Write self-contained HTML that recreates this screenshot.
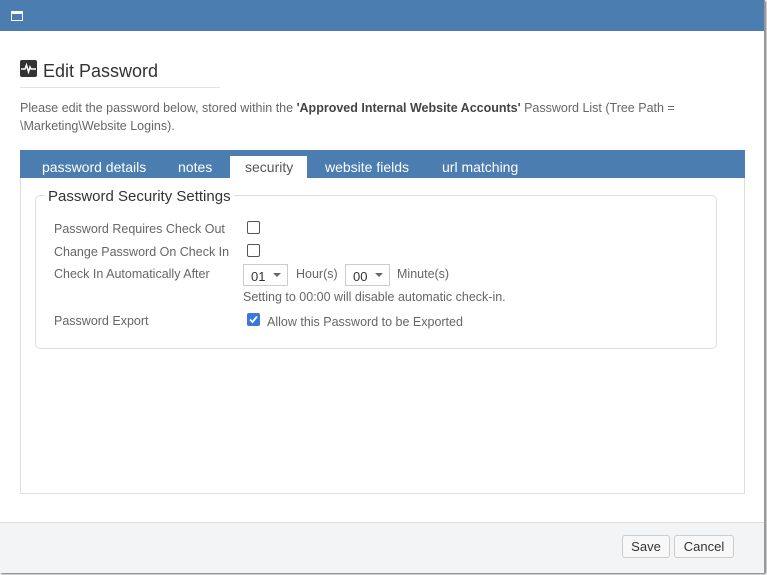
<!DOCTYPE html>
<html><head><style>
*{box-sizing:border-box;margin:0;padding:0}
body{width:767px;height:575px;background:#fff;font-family:"Liberation Sans",sans-serif;position:relative;overflow:hidden;color:#555}
.win{position:absolute;left:0;top:0;width:765px;height:573px;background:#fff;border-right:1px solid #999;border-bottom:1px solid #999;box-shadow:1px 1px 2px #666}
.hdr{position:absolute;left:0;top:0;width:764px;height:31px;background:#4c7db0}
.t{position:absolute;white-space:nowrap}
.panel{position:absolute;left:20px;top:150px;width:725px;height:344px;border:1px solid #ddd}
.tabs{position:absolute;left:20px;top:150px;width:725px;height:28px;background:#4c7db0}
.tab{position:absolute;top:9px;color:#fff;font-size:14px}
.fs{position:absolute;left:35px;top:195px;width:682px;height:154px;border:1px solid #ddd;border-radius:5px}
.lbl{font-size:12.5px;color:#666}
.cb{position:absolute;width:13px;height:13px;border:1px solid #555;border-radius:2px;background:#fff}
.sel{position:absolute;height:22px;border:1px solid #ccc;background:#fff;font-size:13px;color:#333;padding:4px 0 0 7px}
.sel:after{content:"";position:absolute;right:6px;top:8px;border:4px solid transparent;border-top:4px solid #666}
.foot{position:absolute;left:0;top:522px;width:764px;height:51px;background:#f3f4f6;border-top:1px solid #ddd}
.btn{position:absolute;top:535px;height:23px;border:1px solid #ccc;border-radius:3px;background:#f8f8f8;font-size:13px;color:#333;text-align:center;padding-top:3px}
</style></head><body>
<div class="win">
<div class="hdr"><div style="position:absolute;left:11px;top:11px;width:12px;height:10px;border:1.5px solid #fff;border-top-width:3px"></div></div>
<div style="position:absolute;left:20px;top:60px;width:17px;height:17px;background:#333;border-radius:2px">
<svg width="17" height="17" viewBox="0 0 17 17"><path d="M1 9h4l1.5-4 2 7 1.5-5 1 2h5" stroke="#fff" stroke-width="1.5" fill="none"/></svg></div>
<div class="t" style="left:43px;top:61px;font-size:18px;color:#333">Edit Password</div>
<div style="position:absolute;left:20px;top:87px;width:200px;height:1px;background:#e3e3e3"></div>
<div class="t" style="left:20px;top:101px;font-size:12.5px;color:#666">Please edit the password below, stored within the <b style="color:#444">'Approved Internal Website Accounts'</b> Password List (Tree Path =</div>
<div class="t" style="left:20px;top:119px;font-size:12.5px;color:#666">\Marketing\Website Logins).</div>
<div class="panel"></div>
<div class="tabs">
<div class="tab" style="left:22px">password details</div>
<div class="tab" style="left:158px">notes</div>
<div style="position:absolute;left:210px;top:6px;width:77px;height:22px;background:#fff"></div>
<div class="tab" style="left:225px;color:#555">security</div>
<div class="tab" style="left:305px">website fields</div>
<div class="tab" style="left:422px">url matching</div>
</div>
<div class="fs"></div>
<div class="t" style="left:45px;top:188px;font-size:15px;color:#333;background:#fff;padding:0 3px">Password Security Settings</div>
<div class="t lbl" style="left:54px;top:222px">Password Requires Check Out</div>
<div class="cb" style="left:247px;top:221px"></div>
<div class="t lbl" style="left:54px;top:245px">Change Password On Check In</div>
<div class="cb" style="left:247px;top:244px"></div>
<div class="t lbl" style="left:54px;top:267px">Check In Automatically After</div>
<div class="sel" style="left:243px;top:264px;width:45px">01</div>
<div class="t lbl" style="left:296px;top:267px">Hour(s)</div>
<div class="sel" style="left:345px;top:264px;width:45px">00</div>
<div class="t lbl" style="left:397px;top:267px">Minute(s)</div>
<div class="t lbl" style="left:243px;top:290px">Setting to 00:00 will disable automatic check-in.</div>
<div class="t lbl" style="left:54px;top:314px">Password Export</div>
<div class="cb" style="left:247px;top:313px;background:#3b78d8;border-color:#3b78d8"><svg width="11" height="11" viewBox="0 0 11 11" style="position:absolute;left:0;top:0"><path d="M2 5.5l2.5 2.5 4.5-5.5" stroke="#fff" stroke-width="1.8" fill="none"/></svg></div>
<div class="t lbl" style="left:267px;top:315px">Allow this Password to be Exported</div>
<div class="foot"></div>
<div class="btn" style="left:622px;width:48px">Save</div>
<div class="btn" style="left:674px;width:60px">Cancel</div>
</div>
</body></html>
